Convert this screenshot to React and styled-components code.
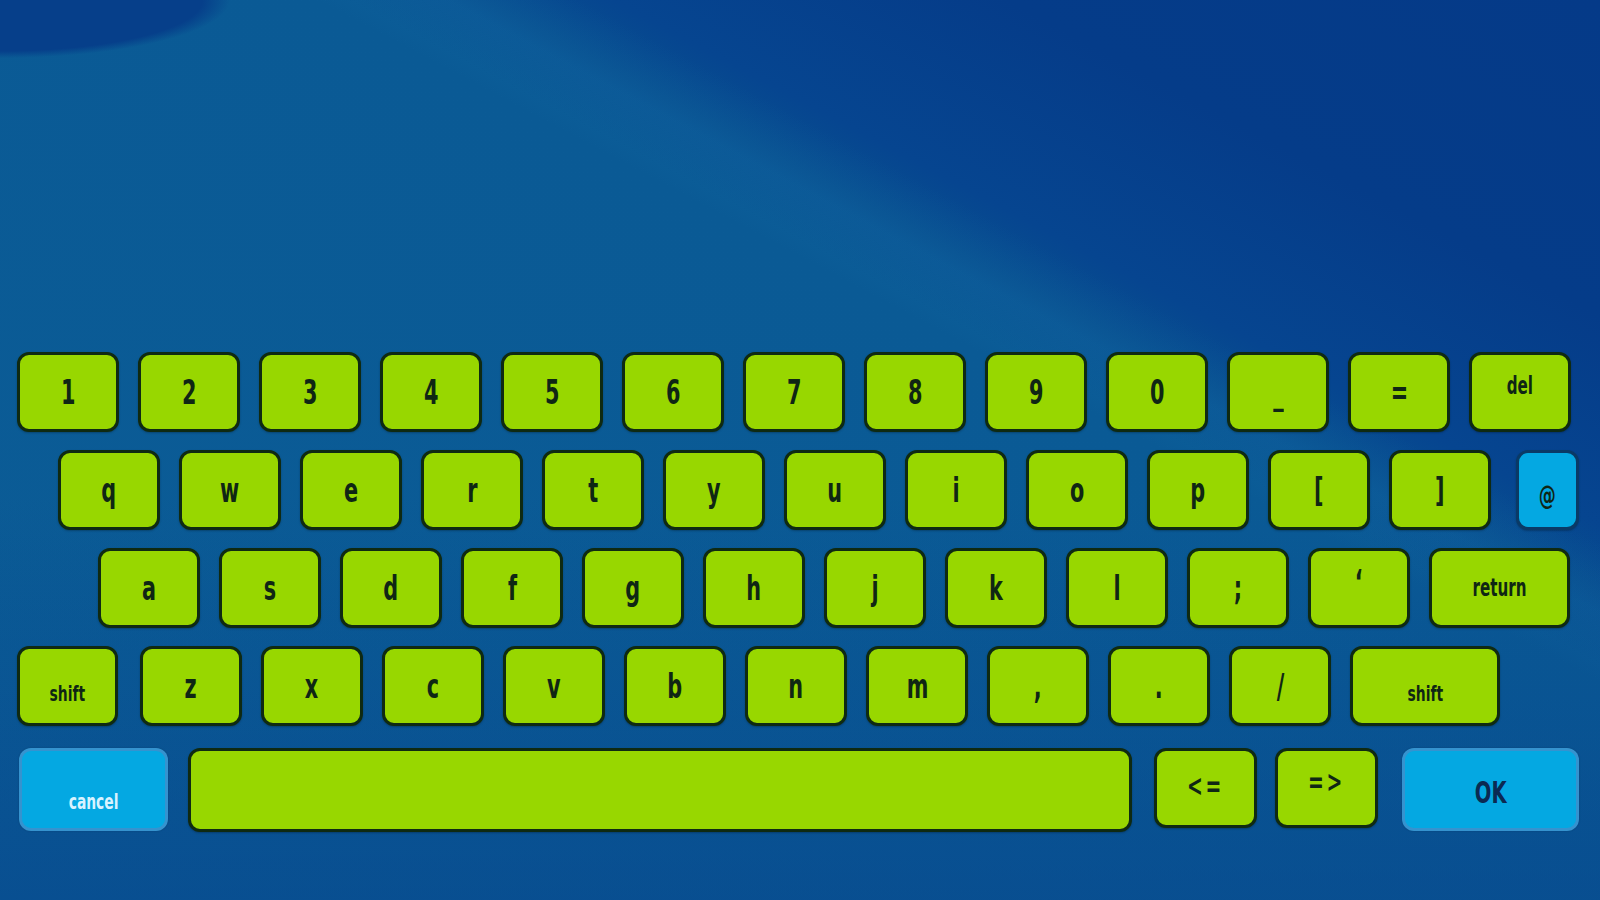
import React from 'react';
import styled, { createGlobalStyle } from 'styled-components';

const GlobalStyle = createGlobalStyle`
  html, body {
    margin: 0;
    padding: 0;
    overflow: hidden;
  }
  * {
    box-sizing: border-box;
  }
`;

const rows = [
  {
    offset: 17,
    keys: ['1', '2', '3', '4', '5', '6', '7', '8', '9', '0',
      { label: '_', dy: 0 }, '=', { label: 'del', size: 24, dy: -6 }],
  },
  {
    offset: 58,
    keys: ['q', 'w', 'e', 'r', 't', 'y', 'u', 'i', 'o', 'p', '[', ']',
      { label: '@', w: 63, gapBefore: 6, variant: 'blue', size: 27, dy: 4 }],
  },
  {
    offset: 98,
    keys: ['a', 's', 'd', 'f', 'g', 'h', 'j', 'k', 'l', ';',
      { label: '‘', dy: -6 }, { label: 'return', w: 141, size: 24 }],
  },
  {
    offset: 17,
    keys: [{ label: 'shift', w: 101, size: 22, dy: 8 }, { label: 'z', gapBefore: 3 },
      'x', 'c', 'v', 'b', 'n', 'm', ',', '.', '/',
      { label: 'shift', w: 150, size: 22, dy: 8 }],
  },
];

const App = () => {
  return (
    <>
      <GlobalStyle />
      <Screen>
        <Keyboard>
          {rows.map((row, i) => (
            <Row key={i} $offset={row.offset}>
              {row.keys.map((k, j) => {
                const key = typeof k === 'string' ? { label: k } : k;
                return (
                  <Key
                    key={j}
                    $w={key.w}
                    $variant={key.variant}
                    $gapBefore={key.gapBefore}
                  >
                    <Label $size={key.size} $dy={key.dy}>{key.label}</Label>
                  </Key>
                );
              })}
            </Row>
          ))}
          <BottomRow>
            <Key $w={149} $h={83} $variant="cancel">
              <Label $size={22} $dy={12} $light>cancel</Label>
            </Key>
            <Key $w={944} $h={84} />
            <Key $w={103} $gapBefore={2}>
              <Label $size={30} $dy={-2} $spaced>{'<='}</Label>
            </Key>
            <Key $w={103} $gapBefore={-2}>
              <Label $size={30} $dy={-6} $spaced>{'=>'}</Label>
            </Key>
            <Key $w={177} $h={83} $gapBefore={4} $variant="ok">
              <Label $size={31} $dy={3} $ok>OK</Label>
            </Key>
          </BottomRow>
        </Keyboard>
      </Screen>
    </>
  );
};

const Screen = styled.div`
  width: 100vw;
  height: 100vh;
  position: relative;
  background:
    radial-gradient(ellipse 230px 58px at 0% 0%, #063f8a 0%, #063f8a 88%, rgba(6, 63, 138, 0) 100%),
    linear-gradient(to bottom, rgba(6, 66, 140, 0) 55%, rgba(6, 66, 140, 0.5) 100%),
    linear-gradient(28deg,
      rgba(255, 255, 255, 0) 61%,
      rgba(30, 130, 190, 0.16) 65%,
      rgba(255, 255, 255, 0) 69%),
    linear-gradient(28deg, #0b5c96 0%, #0a5a95 62%, #08508f 66%, #064590 70%, #053c89 82%, #053a88 100%);
  background-color: #074a90;
  display: flex;
  flex-direction: column;
`;

const Keyboard = styled.div`
  display: flex;
  flex-direction: column;
  gap: 18px;
  padding-top: 352px;
`;

const Row = styled.div`
  display: flex;
  gap: 19px;
  padding-left: ${(p) => p.$offset}px;
  height: 80px;
`;

const BottomRow = styled.div`
  display: flex;
  align-items: flex-start;
  gap: 20px;
  padding-left: 19px;
  margin-top: 4px;
`;

const Key = styled.div`
  width: ${(p) => p.$w || 102}px;
  height: ${(p) => p.$h || 80}px;
  flex-shrink: 0;
  margin-left: ${(p) => p.$gapBefore || 0}px;
  border-radius: 12px;
  display: flex;
  align-items: center;
  justify-content: center;
  background: ${(p) =>
    p.$variant === 'blue' || p.$variant === 'cancel' || p.$variant === 'ok' ? '#04a8e2' : '#98d700'};
  border: 3px solid
    ${(p) =>
      p.$variant === 'blue'
        ? '#0a3a66'
        : p.$variant === 'cancel' || p.$variant === 'ok'
          ? 'rgba(70, 140, 200, 0.75)'
          : '#0f2a12'};
  box-shadow: ${(p) =>
    p.$variant === 'cancel' || p.$variant === 'ok' ? '0 0 2px rgba(0,0,0,0.2)' : '0 1px 2px rgba(0,0,0,0.25)'};
`;

const Label = styled.span`
  font-family: "DejaVu Sans", "Liberation Sans", sans-serif;
  font-stretch: condensed;
  font-weight: 600;
  font-size: ${(p) => p.$size || 33}px;
  line-height: 1;
  color: ${(p) => (p.$light ? '#d9f3ff' : p.$ok ? '#0b2a52' : '#0f2614')};
  letter-spacing: ${(p) => (p.$spaced ? '4px' : '0')};
  transform: translateY(${(p) => p.$dy || 0}px) scaleX(0.7);
  white-space: nowrap;
`;

export default App;
